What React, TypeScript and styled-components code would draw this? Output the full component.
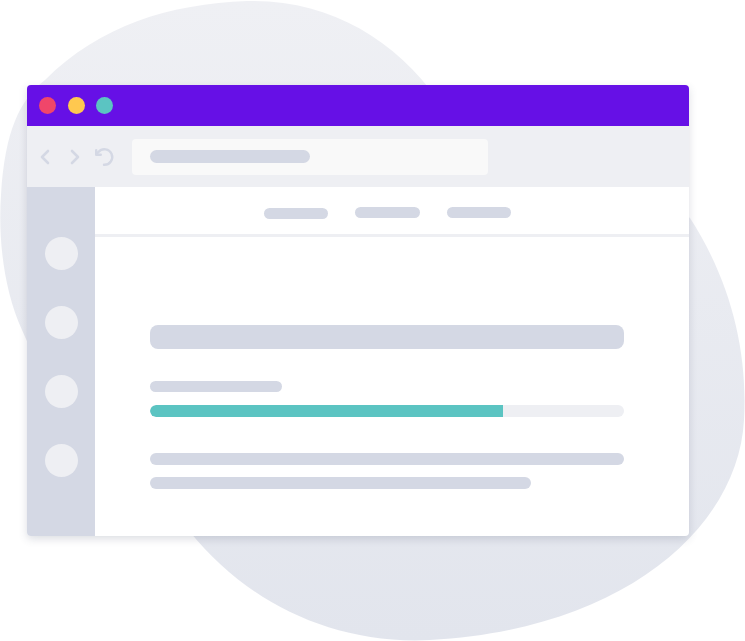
import React from 'react';
import styled, { createGlobalStyle } from 'styled-components';
import { ChevronLeft, ChevronRight } from 'lucide-react';

const GlobalStyle = createGlobalStyle`
  html, body {
    margin: 0;
    padding: 0;
    background: #ffffff;
    font-family: 'Liberation Sans', Arial, sans-serif;
  }
`;

const Stage = styled.div`
  position: relative;
  width: 745px;
  height: 641px;
  overflow: hidden;
  padding: 85px 0 0 27px;
  box-sizing: border-box;
`;

const Blob = styled.svg`
  position: absolute;
  top: 0;
  left: 0;
  width: 745px;
  height: 641px;
`;

const Window = styled.div`
  position: relative;
  width: 662px;
  height: 451px;
  display: flex;
  flex-direction: column;
  border-radius: 4px;
  overflow: hidden;
  background: #ffffff;
  box-shadow: 0 3px 8px rgba(60, 70, 100, 0.18);
`;

const TitleBar = styled.div`
  height: 41px;
  flex-shrink: 0;
  background: #6610e6;
  display: flex;
  align-items: center;
  gap: 11.5px;
  padding-left: 12px;
`;

const Dot = styled.span<{ color: string }>`
  width: 17px;
  height: 17px;
  border-radius: 50%;
  background: ${({ color }) => color};
`;

const Toolbar = styled.div`
  height: 61px;
  flex-shrink: 0;
  background: #eeeff3;
  display: flex;
  align-items: center;
  padding-left: 6px;
`;

const NavIcons = styled.div`
  display: flex;
  align-items: center;
  gap: 6px;
  color: #d4d8e4;
  width: 99px;
`;

const AddressBar = styled.div`
  width: 356px;
  height: 36px;
  border-radius: 4px;
  background: #f9f9f9;
  display: flex;
  align-items: center;
  padding-left: 18px;
  box-sizing: border-box;
`;

const Pill = styled.span<{ w: number; h?: number; drop?: number }>`
  display: block;
  width: ${({ w }) => w}px;
  height: ${({ h }) => h ?? 12}px;
  margin-top: ${({ drop }) => drop ?? 0}px;
  border-radius: 7px;
  background: #d4d8e4;
`;

const Main = styled.div`
  flex: 1;
  display: flex;
`;

const Sidebar = styled.div`
  width: 68px;
  flex-shrink: 0;
  background: #d4d8e4;
  display: flex;
  flex-direction: column;
  align-items: center;
  padding-top: 50px;
  gap: 36px;
`;

const SideCircle = styled.span`
  width: 33px;
  height: 33px;
  border-radius: 50%;
  background: #eeeff3;
`;

const Content = styled.div`
  flex: 1;
  display: flex;
  flex-direction: column;
`;

const TopNav = styled.div`
  height: 27px;
  flex-shrink: 0;
  border-bottom: 3px solid #eeeff3;
  display: flex;
  align-items: flex-start;
  padding: 20px 0 0 169px;
  gap: 27px;
`;

const Body = styled.div`
  padding: 88px 0 0 55px;
  display: flex;
  flex-direction: column;
  width: 474px;
`;

const Heading = styled.div`
  height: 24px;
  border-radius: 8px;
  background: #d4d8e4;
  margin-bottom: 32px;
`;

const Track = styled.div`
  height: 12px;
  border-radius: 6px;
  background: #eeeff3;
  overflow: hidden;
  margin: 13px 0 36px;
`;

const Fill = styled.div`
  height: 100%;
  background: #5bc4c2;
  border-radius: 6px 0 0 6px;
`;

const Lines = styled.div`
  display: flex;
  flex-direction: column;
  gap: 12px;
`;

const progress = 74.4;

const ReloadIcon = () => (
  <svg width="22" height="22" viewBox="0 0 24 24" fill="none" stroke="currentColor" strokeWidth="2.6" strokeLinecap="round" strokeLinejoin="round">
    <path d="M12 20.5 A8.5 8.5 0 1 0 6 6.5 L3.5 9" />
    <path d="M3.5 4.5 V9.5 H8.5" />
  </svg>
);

export default function App() {
  return (
    <>
      <GlobalStyle />
      <Stage>
        <Blob viewBox="0 0 745 641">
          <defs>
            <linearGradient id="blobFill" x1="0" y1="0" x2="0" y2="1">
              <stop offset="0" stopColor="#eff0f4" />
              <stop offset="1" stopColor="#e2e5ed" />
            </linearGradient>
          </defs>
          <path
            fill="url(#blobFill)"
            d="M 247 1
               C 330 -1, 395 40, 438 100
               C 480 160, 620 160, 690 218
               C 730 280, 748 350, 744 420
               C 738 530, 620 630, 430 640
               C 330 645, 245 600, 190 532
               C 130 450, 50 400, 22 330
               C 4 290, -2 240, 1 195
               C 5 130, 20 100, 45 80
               C 100 25, 170 4, 247 1 Z"
          />
        </Blob>
        <Window>
          <TitleBar>
            <Dot color="#f0466a" />
            <Dot color="#ffc84f" />
            <Dot color="#5bc4c2" />
          </TitleBar>
          <Toolbar>
            <NavIcons>
              <ChevronLeft size={24} strokeWidth={2.6} />
              <ChevronRight size={24} strokeWidth={2.6} />
              <ReloadIcon />
            </NavIcons>
            <AddressBar>
              <Pill w={160} h={13} />
            </AddressBar>
          </Toolbar>
          <Main>
            <Sidebar>
              <SideCircle />
              <SideCircle />
              <SideCircle />
              <SideCircle />
            </Sidebar>
            <Content>
              <TopNav>
                <Pill w={64} h={11} drop={1} />
                <Pill w={65} h={11} />
                <Pill w={64} h={11} />
              </TopNav>
              <Body>
                <Heading />
                <Pill w={132} h={11} />
                <Track>
                  <Fill style={{ width: `${progress}%` }} />
                </Track>
                <Lines>
                  <Pill w={474} />
                  <Pill w={381} />
                </Lines>
              </Body>
            </Content>
          </Main>
        </Window>
      </Stage>
    </>
  );
}
